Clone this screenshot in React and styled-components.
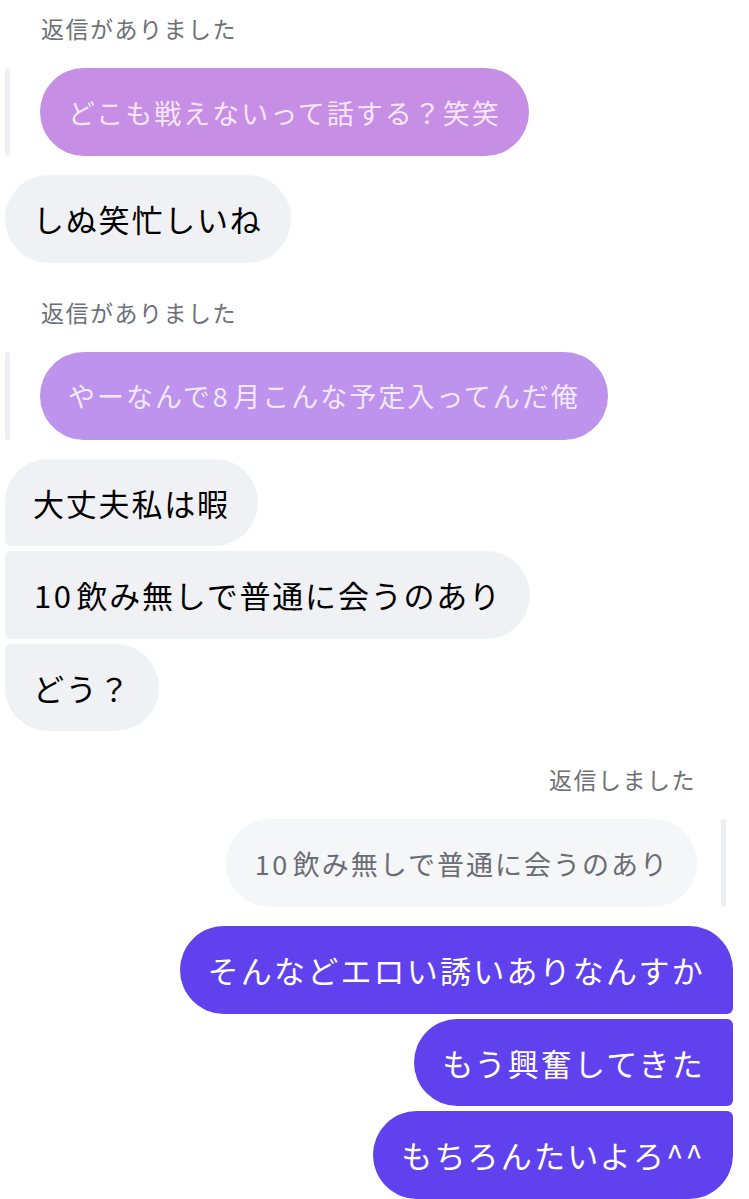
import styled, { createGlobalStyle } from "styled-components";

const GlobalStyle = createGlobalStyle`
  body {
    margin: 0;
    background: #ffffff;
    font-family: "Noto Sans CJK JP", "Noto Sans", sans-serif;
  }
`;

const BIG = "44px";
const SMALL = "6px";

function corners(side, position) {
  // side: which side is stacked ("left" for incoming, "right" for outgoing)
  const top = position === "middle" || position === "last" ? SMALL : BIG;
  const bottom = position === "middle" || position === "first" ? SMALL : BIG;
  if (side === "left") return `${top} ${BIG} ${BIG} ${bottom}`;
  return `${BIG} ${top} ${bottom} ${BIG}`;
}

const Page = styled.div`
  width: 749px;
  height: 1199px;
  overflow: hidden;
  padding: 13px 16px 0 5px;
  box-sizing: border-box;
  display: flex;
  flex-direction: column;
`;

const Group = styled.section`
  display: flex;
  flex-direction: column;
  align-items: ${(p) => (p.$mine ? "flex-end" : "flex-start")};
  margin-bottom: ${(p) => p.$space || 0}px;
`;

const Label = styled.div`
  font-size: 23px;
  line-height: 31px;
  letter-spacing: 1.5px;
  color: #6e7077;
  margin: ${(p) => (p.$mine ? "0 37px 24px 0" : "0 0 24px 36px")};
`;

const ReplyRow = styled.div`
  display: flex;
  flex-direction: ${(p) => (p.$mine ? "row-reverse" : "row")};
  align-items: stretch;
  gap: ${(p) => (p.$mine ? "24px" : "30px")};
  margin-bottom: 19px;
  margin-right: ${(p) => (p.$mine ? "7px" : "0")};
`;

const ReplyBar = styled.div`
  width: 5px;
  border-radius: 3px;
  background: #eeeff3;
`;

const Quote = styled.div`
  height: 88px;
  display: flex;
  align-items: center;
  padding: 0 28px;
  border-radius: 44px;
  font-size: 27px;
  letter-spacing: 2px;
  background: ${(p) => p.$bg};
  color: ${(p) => p.$color};
  white-space: nowrap;
`;

// half-width digits sit a little wider in the original font
const Num = styled.span`
  letter-spacing: 2.5px;
  margin: 0 3px 0 1px;
`;

const Stack = styled.div`
  display: flex;
  flex-direction: column;
  align-items: ${(p) => (p.$mine ? "flex-end" : "flex-start")};
  gap: 5px;
`;

const Bubble = styled.div`
  height: 87.5px;
  display: flex;
  align-items: center;
  padding: 0 28px;
  box-sizing: border-box;
  font-size: 31px;
  letter-spacing: ${(p) => (p.$mine ? "2.2px" : "1.8px")};
  white-space: nowrap;
  border-radius: ${(p) => corners(p.$mine ? "right" : "left", p.$pos)};
  background: ${(p) => (p.$mine ? "#5f41ee" : "#f0f1f5")};
  color: ${(p) => (p.$mine ? "#ffffff" : "#000000")};
`;

function withNumbers(text) {
  return text.split(/(\d+)/).map((part, i) =>
    /^\d+$/.test(part) ? <Num key={i}>{part}</Num> : part
  );
}

function Messages({ items, mine }) {
  return (
    <Stack $mine={mine}>
      {items.map((text, i) => {
        let pos = "single";
        if (items.length > 1) {
          pos = i === 0 ? "first" : i === items.length - 1 ? "last" : "middle";
        }
        return (
          <Bubble key={i} $mine={mine} $pos={pos}>
            {withNumbers(text)}
          </Bubble>
        );
      })}
    </Stack>
  );
}

export default function App() {
  return (
    <>
      <GlobalStyle />
      <Page>
        <Group $space={34}>
          <Label>返信がありました</Label>
          <ReplyRow>
            <ReplyBar />
            <Quote $bg="#c78ee6" $color="#f6e6fb">
              どこも戦えないって話する？笑笑
            </Quote>
          </ReplyRow>
          <Messages items={["しぬ笑忙しいね"]} />
        </Group>

        <Group $space={33}>
          <Label>返信がありました</Label>
          <ReplyRow>
            <ReplyBar />
            <Quote $bg="#bd93ee" $color="#f1e8fd">
              {withNumbers("やーなんで8月こんな予定入ってんだ俺")}
            </Quote>
          </ReplyRow>
          <Messages
            items={["大丈夫私は暇", "10飲み無しで普通に会うのあり", "どう？"]}
          />
        </Group>

        <Group $mine>
          <Label $mine>返信しました</Label>
          <ReplyRow $mine>
            <ReplyBar />
            <Quote $bg="#f5f6f8" $color="#6a6d73">
              {withNumbers("10飲み無しで普通に会うのあり")}
            </Quote>
          </ReplyRow>
          <Messages
            mine
            items={[
              "そんなどエロい誘いありなんすか",
              "もう興奮してきた",
              "もちろんたいよろ^^",
            ]}
          />
        </Group>
      </Page>
    </>
  );
}
